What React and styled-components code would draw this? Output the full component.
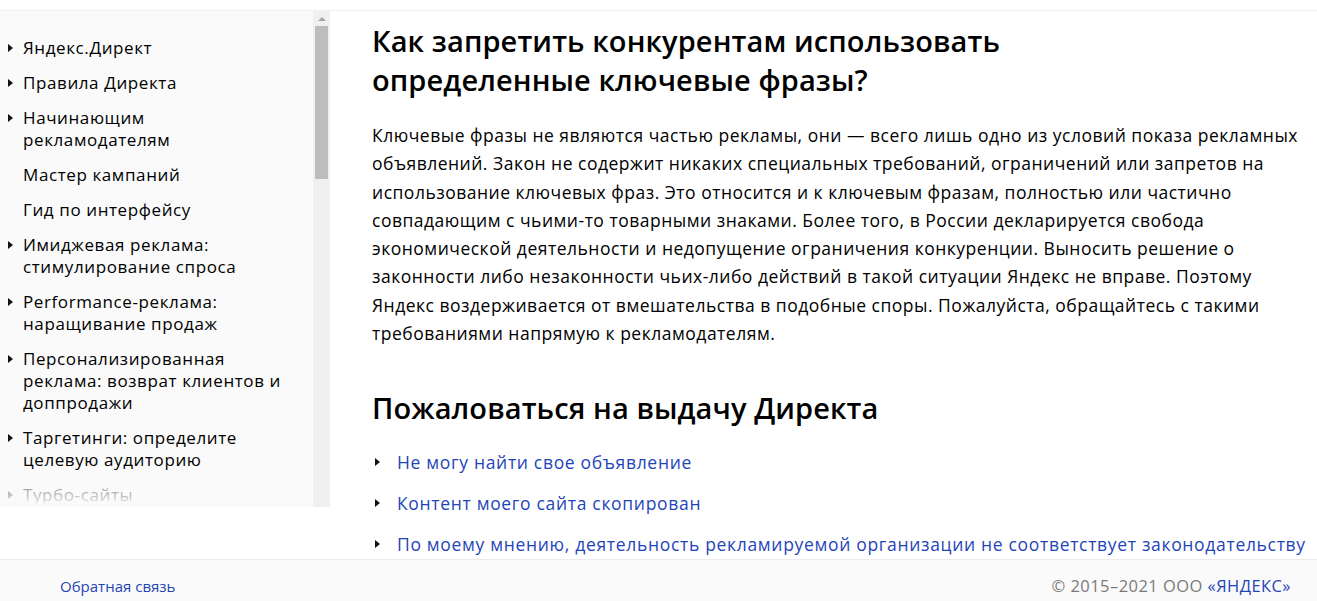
import React from "react";
import styled, { createGlobalStyle } from "styled-components";

const Global = createGlobalStyle`
  html, body { margin: 0; padding: 0; background: #fff; }
  body { font-family: "Open Sans", "Noto Sans", sans-serif; color: #000; }
  * { box-sizing: border-box; }
`;

const Page = styled.div`
  width: 1317px;
  height: 601px;
  display: flex;
  flex-direction: column;
  overflow: hidden;
`;

const TopStrip = styled.div`
  height: 11px;
  flex: none;
  border-bottom: 1px solid #f0f0f0;
`;

const Body = styled.div`
  flex: 1;
  display: flex;
  min-height: 0;
`;

const Sidebar = styled.aside`
  width: 330px;
  flex: none;
  height: 496px;
  display: flex;
  background: #fafafa;
`;

const NavWrap = styled.div`
  position: relative;
  flex: 1;
  overflow: hidden;
`;

const NavList = styled.ul`
  list-style: none;
  margin: 0;
  padding: 26px 23px 0 8px;
  display: flex;
  flex-direction: column;
  gap: 13px;
`;

const NavItem = styled.li`
  display: flex;
  align-items: flex-start;
  font-size: 17px;
  line-height: 22px;
  color: #000;
  letter-spacing: 0.6px;
`;

const Arrow = styled.span`
  width: 15px;
  flex: none;
  display: flex;
  align-items: center;
  height: 22px;
  &::before {
    content: "";
    display: ${(p) => (p.$hidden ? "none" : "block")};
    width: 0;
    height: 0;
    border-top: 4.5px solid transparent;
    border-bottom: 4.5px solid transparent;
    border-left: 5px solid #111;
  }
`;

const Fade = styled.div`
  position: absolute;
  left: 0;
  right: 0;
  bottom: 0;
  height: 30px;
  background: linear-gradient(rgba(250, 250, 250, 0.55), rgba(250, 250, 250, 0.75) 60%, #fafafa);
  pointer-events: none;
`;

const ScrollTrack = styled.div`
  width: 17px;
  flex: none;
  background: #f0f0f0;
  display: flex;
  flex-direction: column;
  align-items: center;
  padding-top: 6px;
  gap: 5px;
`;

const ScrollUp = styled.div`
  width: 0;
  height: 0;
  border-left: 4px solid transparent;
  border-right: 4px solid transparent;
  border-bottom: 4px solid #a3a3a3;
`;

const ScrollThumb = styled.div`
  width: 13px;
  height: 153px;
  background: #bdbdbd;
`;

const Main = styled.main`
  flex: 1;
  padding: 10px 0 0 42px;
  min-width: 0;
`;

const H1 = styled.h1`
  margin: 0;
  font-size: 29px;
  line-height: 39px;
  font-weight: 600;
  letter-spacing: 0.1px;
  width: 700px;
`;

const Para = styled.p`
  margin: 22px 0 0;
  font-size: 17.5px;
  line-height: 28.3px;
  width: 945px;
  letter-spacing: 0.5px;
`;

const H2 = styled.h2`
  margin: 41px 0 0;
  font-size: 29px;
  line-height: 39px;
  font-weight: 600;
  letter-spacing: 0.1px;
`;

const LinkList = styled.ul`
  list-style: none;
  margin: 23px 0 0;
  padding: 0 0 0 3px;
  display: flex;
  flex-direction: column;
  gap: 17px;
`;

const LinkItem = styled.li`
  display: flex;
  align-items: center;
  font-size: 17.5px;
  line-height: 24px;
  white-space: nowrap;
`;

const Bullet = styled.span`
  width: 22px;
  flex: none;
  &::before {
    content: "";
    display: block;
    width: 0;
    height: 0;
    border-top: 4.5px solid transparent;
    border-bottom: 4.5px solid transparent;
    border-left: 5px solid #111;
  }
`;

const Link = styled.a`
  color: #1f45b8;
  text-decoration: none;
  letter-spacing: 0.68px;
`;

const Footer = styled.footer`
  height: 42px;
  flex: none;
  border-top: 1px solid #ebebeb;
  background: #fafafa;
  display: flex;
  align-items: center;
  justify-content: space-between;
  padding: 10px 26px 0 60px;
  font-size: 15px;
`;

const FooterLink = styled.a`
  color: #1f45b8;
  text-decoration: none;
`;

const Copyright = styled.span`
  color: #7a7a7a;
  font-size: 16.5px;
  letter-spacing: 0.45px;
`;

const Brand = styled.span`
  color: #1f45b8;
`;

const nav = [
  { t: "Яндекс.Директ", a: true },
  { t: "Правила Директа", a: true },
  { t: "Начинающим рекламодателям", a: true },
  { t: "Мастер кампаний", a: false },
  { t: "Гид по интерфейсу", a: false },
  { t: "Имиджевая реклама: стимулирование спроса", a: true },
  { t: "Performance-реклама: наращивание продаж", a: true },
  { t: "Персонализированная реклама: возврат клиентов и доппродажи", a: true },
  { t: "Таргетинги: определите целевую аудиторию", a: true },
  { t: "Турбо-сайты", a: true },
];

const links = [
  "Не могу найти свое объявление",
  "Контент моего сайта скопирован",
  "По моему мнению, деятельность рекламируемой организации не соответствует законодательству",
];

export default function App() {
  return (
    <Page>
      <Global />
      <TopStrip />
      <Body>
        <Sidebar>
          <NavWrap>
            <NavList>
              {nav.map((n) => (
                <NavItem key={n.t}>
                  <Arrow $hidden={!n.a} />
                  <span>{n.t}</span>
                </NavItem>
              ))}
            </NavList>
            <Fade />
          </NavWrap>
          <ScrollTrack>
            <ScrollUp />
            <ScrollThumb />
          </ScrollTrack>
        </Sidebar>
        <Main>
          <H1>Как запретить конкурентам использовать определенные ключевые фразы?</H1>
          <Para>
            Ключевые фразы не являются частью рекламы, они — всего лишь одно из условий показа рекламных
            объявлений. Закон не содержит никаких специальных требований, ограничений или запретов на
            использование ключевых фраз. Это относится и к ключевым фразам, полностью или частично
            совпадающим с чьими-то товарными знаками. Более того, в России декларируется свобода
            экономической деятельности и недопущение ограничения конкуренции. Выносить решение о
            законности либо незаконности чьих-либо действий в такой ситуации Яндекс не вправе. Поэтому
            Яндекс воздерживается от вмешательства в подобные споры. Пожалуйста, обращайтесь с такими
            требованиями напрямую к рекламодателям.
          </Para>
          <H2>Пожаловаться на выдачу Директа</H2>
          <LinkList>
            {links.map((l) => (
              <LinkItem key={l}>
                <Bullet />
                <Link href="#">{l}</Link>
              </LinkItem>
            ))}
          </LinkList>
        </Main>
      </Body>
      <Footer>
        <FooterLink href="#">Обратная связь</FooterLink>
        <Copyright>
          © 2015–2021 ООО <Brand>«ЯНДЕКС»</Brand>
        </Copyright>
      </Footer>
    </Page>
  );
}
